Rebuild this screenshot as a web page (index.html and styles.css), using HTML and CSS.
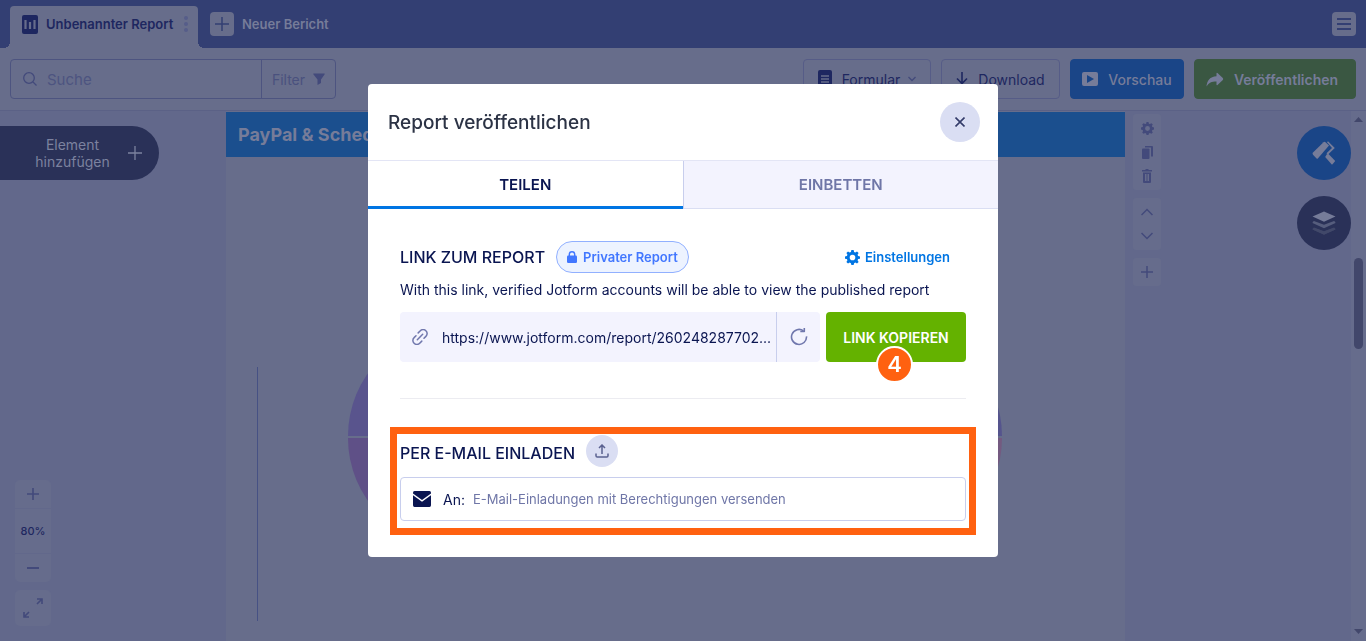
FILE: index.html
```
<!DOCTYPE html>
<html lang="de">
<head>
    <meta charset="UTF-8">
    <meta name="viewport" content="width=device-width, initial-scale=1.0">
    <title>Report veröffentlichen</title>
    <link rel="stylesheet" href="styles.css">
</head>
<body>

<div class="page">
    <header class="topbar">
        <div class="tab">
            <svg width="16" height="19" viewBox="0 0 16 19"><rect width="16" height="19" rx="2" fill="#1e2760"/><path d="M3.500 5v9M8 7v7M12.500 5v9" stroke="#676d8b" stroke-width="2.200"/></svg>
            <span>Unbenannter Report</span>
            <svg class="dots" width="4" height="16" viewBox="0 0 4 16" fill="#565d8a"><circle cx="2" cy="2" r="2"/><circle cx="2" cy="8" r="2"/><circle cx="2" cy="14" r="2"/></svg>
        </div>
        <button class="new-report">
            <span class="new-icon"><svg width="14" height="14" viewBox="0 0 14 14"><path d="M7 0v14M0 7h14" stroke="#333f73" stroke-width="1.500"/></svg></span>
            Neuer Bericht
        </button>
        <button class="menu-button" aria-label="Menü">
            <svg width="14" height="12" viewBox="0 0 14 12"><path d="M0 1h14M0 6h14M0 11h14" stroke="#333f73" stroke-width="2"/></svg>
        </button>
    </header>

    <div class="toolbar">
        <div class="search">
            <svg width="14" height="14" viewBox="0 0 14 14" fill="none" stroke="#434a7b" stroke-width="1.300"><circle cx="6" cy="6" r="5.300"/><path d="M10 10l3.500 3.500"/></svg>
            <input type="text" placeholder="Suche" aria-label="Suche">
            <button class="filter">Filter
                <svg width="12" height="12" viewBox="0 0 12 12" fill="#434a7b"><path d="M.5.500h11q.500.500 0 1L8 6.500V10l-3.500 2V6.500L.5 1.500q-.500-.500 0-1z"/></svg>
            </button>
        </div>
        <button class="tool form-tool">
            <svg width="14" height="18" viewBox="0 0 14 18"><rect width="14" height="18" rx="2" fill="#1e2760"/><path d="M3 6h8M3 9h8M3 12h8" stroke="#676d8b" stroke-width="1.300"/></svg>
            Formular
            <svg class="caret" width="8" height="6" viewBox="0 0 8 6" fill="none" stroke="#434a7b" stroke-width="1.300"><path d="M.5 1L4 4.500 7.500 1"/></svg>
        </button>
        <button class="tool download">
            <svg width="12" height="14" viewBox="0 0 12 14" fill="none" stroke="#1e2760" stroke-width="1.600"><path d="M6 0v11M1 6.500l5 5 5-5"/></svg>
            Download
        </button>
        <button class="tool preview">
            <svg width="16" height="14" viewBox="0 0 16 14"><rect width="16" height="14" rx="2" fill="#767c99"/><path d="M5 3l7 4-7 4z" fill="#1a4587"/></svg>
            Vorschau
        </button>
        <button class="tool publish">
            <svg width="18" height="15" viewBox="0 0 18 15" fill="#767c99"><path d="M10.500 1.200v3C4 4.600 1 8.500.5 14.500c2.500-4 5-5 10-5v3.200q.2.800 1 .2l5.300-5q.9-.9 0-1.800l-5.300-5q-.800-.500-1 .1z"/></svg>
            Veröffentlichen
        </button>
    </div>

    <main class="workspace">
        <aside class="side-left">
            <button class="add-element">
                <span>Element hinzufügen</span>
                <svg width="14" height="14" viewBox="0 0 14 14"><path d="M7 0v14M0 7h14" stroke="#7c829f" stroke-width="1.300"/></svg>
            </button>
            <div class="zoom">
                <button aria-label="Vergrößern"><svg width="12" height="12" viewBox="0 0 12 12"><path d="M6 0v12M0 6h12" stroke="#434a7b" stroke-width="1.600"/></svg></button>
                <span class="zoom-value">80%</span>
                <button aria-label="Verkleinern"><svg width="12" height="12" viewBox="0 0 12 12"><path d="M0 6h12" stroke="#434a7b" stroke-width="2"/></svg></button>
            </div>
            <button class="fullscreen" aria-label="Vollbild">
                <svg width="22" height="22" viewBox="0 0 22 22" fill="none" stroke="#434a7b" stroke-width="1.600"><path d="M15 2h5v5M20 2l-5 5M2 15v5h5M2 20l5-5"/></svg>
            </button>
        </aside>

        <section class="canvas">
            <h1>PayPal &amp; Sched</h1>
            <div class="charts">
                <div class="axis"></div>
                <svg width="218" height="218" viewBox="0 0 218 218"><path d="M0 108a109 109 0 0 1 218 0z" fill="#59548d"/><path d="M0 110a109 109 0 0 0 218 0z" fill="#5f5087"/></svg>
                <svg width="218" height="218" viewBox="0 0 218 218"><path d="M0 108a109 109 0 0 1 218 0z" fill="#55548d"/><path d="M0 110a109 109 0 0 0 218 0z" fill="#745a80"/></svg>
            </div>
        </section>

        <aside class="side-right">
            <div class="page-tools">
                <div class="tool-group">
                    <button aria-label="Einstellungen der Seite"><svg width="13" height="13" viewBox="0 0 16 16"><path d="M6.800 0h2.400l.5 2 1.300.6L12.800 1.500l1.700 1.700L13.400 5l.6 1.300 2 .5v2.400l-2 .5-.6 1.300 1.100 1.800-1.700 1.700-1.800-1.100-1.300.6-.5 2H6.800l-.5-2L5 13.400l-1.800 1.100-1.700-1.700L2.600 11 2 9.700l-2-.5V6.800l2-.5L2.600 5 1.500 3.200l1.700-1.700L5 2.600 6.300 2zM8 5a3 3 0 1 0 0 6 3 3 0 0 0 0-6z" fill="#434a7b" fill-rule="evenodd"/></svg></button>
                    <button aria-label="Duplizieren"><svg width="11" height="13" viewBox="0 0 11 13" fill="#434a7b"><rect y="2.500" width="7.500" height="10.500" rx="1"/><path d="M3 0h7q1 0 1 1v9.500H9V1.500H3z"/></svg></button>
                    <button aria-label="Löschen"><svg width="10" height="14" viewBox="0 0 10 14" fill="#434a7b"><path d="M0 1h3l1-1h2l1 1h3v1.500H0zM1 3.500h8V13q0 1-1 1H2q-1 0-1-1zM3 5v7h1.500V5zM5.500 5v7H7V5z" fill-rule="evenodd"/></svg></button>
                </div>
                <div class="tool-group">
                    <button aria-label="Nach oben"><svg width="12" height="8" viewBox="0 0 12 8" fill="none" stroke="#434a7b" stroke-width="1.500"><path d="M.5 7L6 1.500 11.500 7"/></svg></button>
                    <button aria-label="Nach unten"><svg width="12" height="8" viewBox="0 0 12 8" fill="none" stroke="#434a7b" stroke-width="1.500"><path d="M.5 1L6 6.500 11.500 1"/></svg></button>
                </div>
                <div class="tool-group">
                    <button aria-label="Seite hinzufügen"><svg width="12" height="12" viewBox="0 0 12 12"><path d="M6 0v12M0 6h12" stroke="#434a7b" stroke-width="1.500"/></svg></button>
                </div>
            </div>
            <div class="round-tools">
                <button class="round designer" aria-label="Designer">
                    <svg width="24" height="24" viewBox="0 0 24 24" fill="#767c99"><path d="M1 11.500L11.500 1.200Q12.300.500 13.200 1L17 4.600 5.800 17.500q-.6.600-1.200 0L1 13.800q-1-1.200 0-2.300z"/><path d="M15 1.200l1-.9 6.800 6.700-7 6.700-1.300-1.400L20 7.100z"/><path d="M14.800 13.300l1.700-.3 6.300 6.500q.4.500 0 1l-2.300 2.800q-.500.500-1 0l-6.300-7.200z"/></svg>
                </button>
                <button class="round layers" aria-label="Ebenen">
                    <svg width="24" height="24" viewBox="0 0 24 24"><path d="M.5 18.500L3 17.300l9 3.200 9-3.200 2.500 1.200-11.500 5z" fill="#414869"/><path d="M.5 18.500Q.5 17 2 16.500l10 3.700 10-3.700q1.500.5 1.500 2L12 23.800z" fill="#414869"/><path d="M.5 12Q.5 10.500 2 10l10 3.700L22 10q1.500.5 1.500 2L12 17.300z" fill="#565d7d"/><path d="M12 .500l11.500 5L12 10.700.5 5.500z" fill="#767c99"/></svg>
                </button>
            </div>
        </aside>

        <div class="scrollbar">
            <svg width="9" height="5" viewBox="0 0 9 5" fill="#42476b"><path d="M0 5L4.500 0 9 5z"/></svg>
            <div class="thumb"></div>
            <svg width="9" height="5" viewBox="0 0 9 5" fill="#42476b"><path d="M0 0l4.500 5L9 0z"/></svg>
        </div>
    </main>
</div>

<div class="overlay">
    <div class="modal" role="dialog" aria-labelledby="modalTitle">
        <div class="modal-header">
            <h2 id="modalTitle">Report veröffentlichen</h2>
            <button class="close" aria-label="Schließen">
                <svg width="10" height="10" viewBox="0 0 10 10"><path d="M.5.500l9 9M9.500.500l-9 9" stroke="#343c6a" stroke-width="1.600"/></svg>
            </button>
        </div>
        <div class="modal-tabs">
            <button class="active">TEILEN</button>
            <button>EINBETTEN</button>
        </div>
        <div class="modal-body">
            <div class="row">
                <h3>LINK ZUM REPORT</h3>
                <button class="private">
                    <svg width="10" height="12" viewBox="0 0 10 12"><rect y="4.500" width="10" height="7.500" rx="1.200" fill="#4277ff"/><path d="M2.300 5V3.500a2.700 2.700 0 0 1 5.400 0V5" fill="none" stroke="#4277ff" stroke-width="1.400"/></svg>
                    Privater Report
                </button>
                <a class="settings" href="#">
                    <svg width="15" height="15" viewBox="0 0 16 16"><path d="M6.800 0h2.400l.5 2 1.300.6L12.800 1.500l1.700 1.700L13.400 5l.6 1.300 2 .5v2.400l-2 .5-.6 1.300 1.100 1.800-1.700 1.700-1.800-1.100-1.300.6-.5 2H6.800l-.5-2L5 13.400l-1.800 1.100-1.700-1.700L2.600 11 2 9.700l-2-.5V6.800l2-.5L2.600 5 1.500 3.200l1.700-1.700L5 2.600 6.300 2zM8 5a3 3 0 1 0 0 6 3 3 0 0 0 0-6z" fill="#0075e3" fill-rule="evenodd"/></svg>
                    Einstellungen
                </a>
            </div>
            <p>With this link, verified Jotform accounts will be able to view the published report</p>
            <div class="link-row">
                <div class="link-field">
                    <svg width="16" height="16" viewBox="0 0 16 16" fill="none" stroke="#7077ad" stroke-width="1.500" stroke-linecap="round"><path d="M5.300 10.700l5.400-5.400"/><path d="M6.200 3.900L8.300 1.800a3.800 3.800 0 0 1 5.600 0 3.800 3.800 0 0 1 0 5.600L12 9.300M9.800 12.100l-2.100 2.100a3.800 3.800 0 0 1-5.600 0 3.800 3.800 0 0 1 0-5.600L4 6.700"/></svg>
                    <input type="text" value="https://www.jotform.com/report/260248287702..." aria-label="Link zum Report" readonly>
                    <button aria-label="Link erneuern">
                        <svg width="18" height="18" viewBox="0 0 18 18" fill="none" stroke="#7077ad" stroke-width="1.600"><path d="M13.500 2.900a7.500 7.500 0 1 0 3 5.500"/><path d="M14.300 0v3.500h-4" stroke-linejoin="round"/></svg>
                    </button>
                </div>
                <button class="copy">LINK KOPIEREN<span class="step">4</span></button>
            </div>
            <hr>
            <div class="invite">
                <div class="row">
                    <h3>PER E-MAIL EINLADEN</h3>
                    <button class="upload" aria-label="Hochladen">
                        <svg width="14" height="14" viewBox="0 0 14 14" fill="none" stroke="#5a6190" stroke-width="1.500"><path d="M7 10V1M4 4l3-3 3 3M1 9.500v2.200Q1 13 2.200 13h9.600q1.200 0 1.200-1.300V9.500"/></svg>
                    </button>
                </div>
                <div class="email-field">
                    <svg width="18" height="16" viewBox="0 0 18 16" fill="#0a1551"><path d="M1.500 0h15Q18 0 18 1.500v1L9 9 0 2.500v-1Q0 0 1.500 0z"/><path d="M0 4.300l9 6.400 9-6.400v10q0 1.700-1.500 1.700h-15Q0 16 0 14.300z"/></svg>
                    <label for="email">An:</label>
                    <input type="text" id="email" placeholder="E-Mail-Einladungen mit Berechtigungen versenden">
                </div>
            </div>
        </div>
    </div>
</div>

</body>
</html>
```
FILE: styles.css
```
* {
    box-sizing: border-box;
}

body {
    font-family: Inter, "Liberation Sans", sans-serif;
    font-size: 14px;
    margin: 0;
    overflow: hidden;
}

button, input {
    font: inherit;
    color: inherit;
    border: none;
    padding: 0;
    background: none;
}

button {
    display: flex;
    align-items: center;
    justify-content: center;
    cursor: pointer;
}

svg {
    flex: none;
}

.page {
    background-color: #676d8b;
    color: #1e2760;
    height: 100vh;
    display: flex;
    flex-direction: column;
}

/* Top bar */
.topbar {
    background-color: #333f73;
    height: 48px;
    padding: 0 10px;
    display: flex;
    align-items: center;
    font-size: 13px;
    font-weight: 600;
}

.tab {
    align-self: flex-end;
    display: flex;
    align-items: center;
    gap: 8px;
    width: 188px;
    height: 42px;
    padding: 0 10px 6px 12px;
    border-radius: 4px 4px 0 0;
    background-color: #676d8b;
    position: relative;
}

.tab::before, .tab::after {
    content: "";
    position: absolute;
    bottom: 0;
    width: 6px;
    height: 6px;
}

.tab::before {
    left: -6px;
    background: radial-gradient(circle at 0 0, #333f73 6px, #676d8b 6px);
}

.tab::after {
    right: -6px;
    background: radial-gradient(circle at 100% 0, #333f73 6px, #676d8b 6px);
}

.tab span {
    white-space: nowrap;
}

.dots {
    margin-left: auto;
}

.new-report {
    color: #767c99;
    margin-left: 12px;
    gap: 8px;
}

.new-icon {
    display: flex;
    align-items: center;
    justify-content: center;
    width: 24px;
    height: 24px;
    border-radius: 4px;
    background-color: #676d8b;
}

.menu-button {
    margin-left: auto;
    width: 24px;
    height: 24px;
    border-radius: 4px;
    background-color: #676d8b;
}

/* Toolbar */
.toolbar {
    display: flex;
    gap: 10px;
    padding: 11px 10px;
    border-bottom: 1px solid #5b6186;
}

.search {
    display: flex;
    align-items: center;
    width: 326px;
    height: 40px;
    margin-right: auto;
    padding-left: 12px;
    border: 1px solid #4d5480;
    border-radius: 4px;
}

.search input {
    flex: 1;
    min-width: 0;
    padding: 0 10px;
    outline: none;
    font-size: 15px;
}

.search input::placeholder {
    color: #4d5480;
    opacity: 1;
}

.filter {
    align-self: stretch;
    gap: 8px;
    width: 74px;
    border-left: 1px solid #4d5480;
    color: #4a517e;
}

.tool {
    height: 40px;
    gap: 10px;
    padding: 0 10px;
    border: 1px solid #565c87;
    border-radius: 4px;
}

.form-tool {
    min-width: 128px;
}

.form-tool .caret {
    margin-left: -2px;
}

.download {
    min-width: 119px;
}

.preview {
    min-width: 114px;
    background-color: #1a4587;
    border-color: #1a4587;
    color: #767c99;
    font-weight: 500;
}

.publish {
    min-width: 162px;
    background-color: #3a5742;
    border-color: #3a5742;
    color: #767c99;
    font-weight: 600;
    padding-right: 16px;
}

/* Workspace */
.workspace {
    flex: 1;
    min-height: 0;
    display: flex;
    background-color: #62688b;
}

.side-left {
    width: 226px;
    padding: 15px 0;
    display: flex;
    flex-direction: column;
    align-items: flex-start;
}

.add-element {
    width: 159px;
    height: 54px;
    border-radius: 0 27px 27px 0;
    background-color: #2a3158;
    color: #7c829f;
    line-height: 17px;
    gap: 16px;
    padding-left: 16px;
}

.add-element span {
    width: 78px;
}

.zoom {
    margin: auto 0 8px 15px;
    width: 36px;
    border-radius: 5px;
    background-color: #666c8c;
}

.zoom button {
    width: 36px;
    height: 28px;
}

.zoom-value {
    display: block;
    border: solid #62688b;
    border-width: 1px 0;
    line-height: 44px;
    font-size: 11px;
    font-weight: 500;
    text-align: center;
}

.fullscreen {
    width: 36px;
    height: 36px;
    margin-left: 15px;
    border-radius: 5px;
    background-color: #666c8c;
}

.canvas {
    flex: 1;
    min-width: 0;
    background-color: #676d8b;
    padding-top: 1px;
}

.canvas h1 {
    margin: 0;
    padding-left: 12px;
    line-height: 45px;
    font-size: 18px;
    font-weight: 700;
    background-color: #1b4f8e;
    color: #767c99;
}

.charts {
    display: flex;
    justify-content: space-between;
    margin-top: 171px;
    padding: 0 123px 0 31px;
}

.axis {
    width: 1px;
    height: 254px;
    margin: 39px -128px 0 0;
    background-color: #465184;
}

.side-right {
    width: 226px;
    display: flex;
    justify-content: space-between;
    padding-left: 8px;
}

.page-tools {
    display: flex;
    flex-direction: column;
    gap: 8px;
    padding-top: 3px;
}

.tool-group {
    padding: 2px 0;
    border-radius: 3px;
    background-color: #666c8c;
}

.tool-group button {
    width: 28px;
    height: 24px;
}

.round-tools {
    display: flex;
    flex-direction: column;
    gap: 16px;
    padding-top: 15px;
}

.round {
    width: 54px;
    height: 54px;
    border-radius: 50%;
}

.designer {
    background-color: #1a4587;
}

.layers {
    background-color: #2a3158;
}

.scrollbar {
    width: 15px;
    padding: 6px 0 7px;
    display: flex;
    flex-direction: column;
    align-items: center;
    background-color: #666c8c;
}

.thumb {
    width: 9px;
    height: 91px;
    margin: 136px 0 auto;
    border-radius: 5px;
    background-color: #42476b;
}

/* Modal */
.overlay {
    position: fixed;
    inset: 0;
    display: flex;
    align-items: center;
    justify-content: center;
}

.modal {
    width: 630px;
    max-width: 100%;
    background-color: #fff;
    color: #0a1551;
    border-radius: 4px;
    overflow: hidden;
}

.modal-header {
    display: flex;
    align-items: center;
    justify-content: space-between;
    padding: 18px 18px 18px 20px;
    border-bottom: 1px solid #e3e5f5;
}

.modal-header h2 {
    margin: 0;
    font-size: 19px;
    font-weight: 500;
    color: #2c3345;
}

.close {
    width: 40px;
    height: 40px;
    border-radius: 50%;
    background-color: #dadef3;
}

.modal-tabs {
    display: flex;
}

.modal-tabs button {
    flex: 1;
    height: 48px;
    background-color: #f3f3fe;
    border-left: 1px solid #c8ceed;
    border-bottom: 1px solid #dadef3;
    color: #6f76a7;
    font-size: 15px;
    font-weight: 600;
}

.modal-tabs .active {
    padding-top: 2px;
    background-color: #fff;
    border-left: none;
    border-bottom: 3px solid #0075e3;
    color: #0a1551;
}

.modal-body {
    padding: 32px 32px 22px;
}

.row {
    display: flex;
    align-items: center;
    gap: 11px;
}

.row h3 {
    margin: 0;
    font-size: 16px;
    font-weight: 500;
}

.private {
    height: 32px;
    gap: 6px;
    padding: 0 10px;
    border: 1px solid #91b0ff;
    border-radius: 16px;
    background-color: #edf3ff;
    color: #4277ff;
    font-size: 13px;
    font-weight: 600;
}

.settings {
    display: flex;
    align-items: center;
    gap: 5px;
    margin-left: auto;
    padding-right: 16px;
    color: #0075e3;
    font-size: 13px;
    font-weight: 600;
    text-decoration: none;
}

.modal-body p {
    margin: 7px 0 12px;
    line-height: 20px;
}

.link-row {
    display: flex;
    gap: 6px;
}

.link-field {
    flex: 1;
    display: flex;
    align-items: center;
    height: 50px;
    padding-left: 12px;
    border-radius: 4px;
    background-color: #f3f3fe;
}

.link-field input {
    flex: 1;
    min-width: 0;
    padding: 0 2px 0 14px;
    text-overflow: ellipsis;
    outline: none;
}

.link-field button {
    align-self: stretch;
    width: 44px;
    border-left: 1px solid #c8ceed;
}

.copy {
    width: 140px;
    height: 50px;
    border-radius: 4px;
    background-color: #64b200;
    color: #fff;
    font-weight: 600;
    position: relative;
}

.step {
    position: absolute;
    top: 34px;
    left: 50px;
    width: 37px;
    border: 2px solid #fff;
    border-radius: 50%;
    background-color: #ff6110;
    font-size: 22px;
    line-height: 33px;
    text-align: center;
}

.modal-body hr {
    margin: 36px 0 28px;
    border: none;
    border-top: 1px solid #ececf1;
}

.invite {
    margin: 0 -10px;
    padding: 1px 3px 7px;
    border: 7px solid #ff6110;
}

.invite h3 {
    padding-top: 4px;
}

.upload {
    width: 32px;
    height: 32px;
    border-radius: 50%;
    background-color: #dadef3;
}

.email-field {
    display: flex;
    align-items: center;
    height: 44px;
    margin-top: 10px;
    padding: 0 12px;
    border: 1px solid #c8ceed;
    border-radius: 4px;
}

.email-field label {
    margin: 0 8px 0 12px;
}

.email-field input {
    flex: 1;
    min-width: 0;
    outline: none;
    font-size: 13px;
}

.email-field input::placeholder {
    color: #6f76a7;
    opacity: 1;
}
```
